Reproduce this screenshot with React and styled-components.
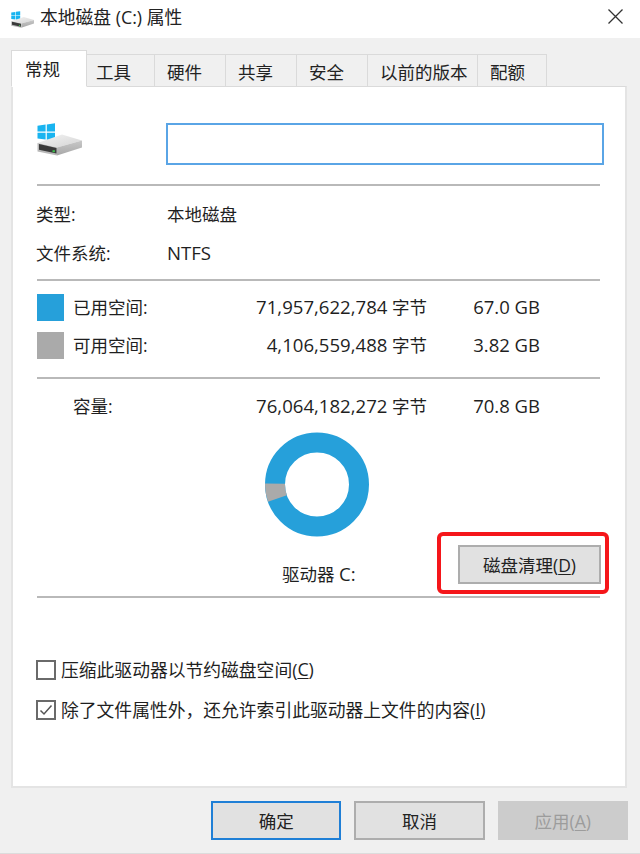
import React from "react";
import styled, { createGlobalStyle } from "styled-components";

const Global = createGlobalStyle`
  html, body { margin: 0; padding: 0; background: #f0f0f0; }
  body { width: 640px; height: 854px; overflow: hidden; }
  * { box-sizing: border-box; }
`;
const FONT = `"Open Sans", "Noto Sans CJK SC", sans-serif`;

const Dialog = styled.div`
  width: 640px; height: 854px; display: flex; flex-direction: column;
  background: #f0f0f0; border-bottom: 1px solid #dcdcdc;
  font-family: ${FONT}; font-size: 17.5px; color: #1f1f1f;
`;
const TitleBar = styled.header`
  height: 38px; background: #fff; display: flex; align-items: center;
  padding: 0 17px 0 11px; flex: none;
`;
const TitleText = styled.span`
  margin-left: 6px; font-size: 17.8px; flex: 1; color: #222; position: relative; top: -3px;
`;
const CloseButton = styled.span`display: flex; position: relative; top: -3px;`;
const Body = styled.div`padding: 12px 12px 0 11px; flex: 1; display: flex; flex-direction: column;`;
const TabStrip = styled.div`display: flex; align-items: flex-end; height: 37px; position: relative; z-index: 1;`;
const Tab = styled.div`
  width: ${p => p.$w}px; height: ${p => p.$active ? 37 : 33}px;
  display: flex; align-items: center; justify-content: flex-start;
  padding-left: ${p => p.$pad}px;
  background: ${p => p.$active ? "#fff" : "#f0f0f0"};
  border: 1px solid #dadada;
  border-left-width: ${p => p.$active ? 1 : 0}px;
  border-bottom: ${p => p.$active ? "1px solid #fff" : "1px solid #dadada"};
  font-size: 17.5px; color: #222;
  padding-top: ${p => p.$active ? 0 : 2}px;
  padding-bottom: ${p => p.$active ? 1 : 0}px;
  white-space: nowrap;
`;
const Panel = styled.main`
  height: 702px; margin-top: -1px; margin-right: 1px; background: #fff;
  border: 2px solid #e4e4e4; border-top-width: 1px; border-top-color: #dadada;
  padding: 36px 24px 0 24px; display: flex; flex-direction: column;
`;
const NameRow = styled.div`display: flex; align-items: flex-start; height: 61px;`;
const IconSlot = styled.div`width: 130px; flex: none;`;
const NameInput = styled.div`
  width: 438px; height: 42px; border: 2px solid #5aa5e6; background: #fff;
  margin-left: -1px; margin-right: -4px;
`;
const Divider = styled.hr`
  margin: 0 1px 0 0; border: 0; height: 2px; background: #b9b9b9; flex: none;
`;
const InfoGrid = styled.div`padding-top: 8px; height: 93px; display: flex; flex-direction: column;`;
const InfoRow = styled.div`display: flex; align-items: center; height: 39px;`;
const InfoLabel = styled.span`width: 130px; margin-left: -1px; margin-right: 1px;`;
const Latin = styled.span`font-size: 18.6px;`;
const SpaceGroup = styled.div`padding-top: 8px; height: 96px; display: flex; flex-direction: column;`;
const SpaceRow = styled.div`display: flex; align-items: center; height: 37.5px;`;
const Swatch = styled.span`
  width: 27px; height: 27px; background: ${p => p.$color}; flex: none; margin-right: 9px;
`;
const SpaceLabel = styled.span`width: 130px; flex: none; padding-left: 36px; position: relative; top: -1px;`;
const SpaceLabelInner = styled.span`width: 85px; flex: none; position: relative; top: -1px;`;
const Bytes = styled.span`
  width: ${p => p.$w}px; text-align: right; flex: none; white-space: nowrap;
  position: relative; top: -1px;
`;
const Size = styled.span`
  width: 113px; text-align: right; flex: none; white-space: nowrap; font-size: 18.5px;
  position: relative; top: -1px;
`;
const Capacity = styled.div`padding-top: 9px; height: 53px;`;
const DonutWrap = styled.div`display: flex; justify-content: center; width: 560px; height: 105px;`;
const DriveRow = styled.div`display: flex; align-items: flex-start; height: 59px; padding-top: 8px;`;
const DriveLabel = styled.span`margin-left: 245px; width: 179px; padding-top: 16px; margin-right: 3px;`;
const Highlighted = styled.span`position: relative; display: block;`;
const RedBox = styled.span`
  position: absolute; left: -21px; top: -13px; width: 172px; height: 62px;
  border: 4px solid #f5161a; border-radius: 6px; pointer-events: none;
`;
const Button = styled.button`
  width: ${p => p.$w}px; height: 39px; padding: 0; margin: 0;
  font-family: ${FONT}; font-size: 17.5px;
  color: ${p => p.$disabled ? "#9c9c9c" : "#222"};
  background: ${p => p.$disabled ? "#cccccc" : "#e1e1e1"};
  border: 2px solid ${p => p.$default ? "#1f7fd6" : p.$disabled ? "#cccccc" : "#adadad"};
  display: block;
`;
const Key = styled.span`text-decoration: underline; text-underline-offset: 2px;`;
const Checks = styled.div`padding-top: 61px; display: flex; flex-direction: column; gap: 20px;`;
const CheckRow = styled.label`display: flex; align-items: center; height: 20px; white-space: nowrap; margin-left: -1px; font-size: 17.8px;`;
const CheckBox = styled.span`
  width: 20px; height: 20px; border: 2px solid #6a6a6a; background: #fff;
  display: flex; align-items: center; justify-content: center; margin-right: 5px; flex: none;
  position: relative; top: 1px;
`;
const Footer = styled.footer`
  display: flex; padding: 13px 0 0 200px; gap: 13px;
`;

const Drive = ({ w, h }) => (
  <svg width={w} height={h} viewBox="0 0 45 33">
    <defs>
      <linearGradient id={`top${w}`} x1="0" y1="0" x2="1" y2="1">
        <stop offset="0" stopColor="#f4f4f4" /><stop offset="1" stopColor="#d4d4d4" />
      </linearGradient>
      <linearGradient id={`side${w}`} x1="0" y1="0" x2="0" y2="1">
        <stop offset="0" stopColor="#c8c8c8" /><stop offset="1" stopColor="#a8a8a8" />
      </linearGradient>
    </defs>
    <path d="M.5 2.8 8.6 1.6V8.6H.5ZM9.8 1.4 18 .3V8.6H9.8ZM.5 9.8H8.6V16.6L.5 15.6ZM9.8 9.8H18V17.6L9.8 16.8Z" fill="#19b4f0" />
    <path d="M.5 20 25 11.5 45 17.5 20 24.5Z" fill={`url(#top${w})`} />
    <path d="M20 24.5 45 17.5V24.5L20 32.5Z" fill={`url(#side${w})`} />
    <path d="M.5 20 20 24.5V32.5L.5 28.5Z" fill="#b8b8b8" />
    <path d="M2 21 19.5 25V30.5L2 26.8Z" fill="#3a3a3a" />
    <rect x="15.5" y="27.2" width="2.4" height="2" fill="#3fbf4c" />
  </svg>
);

const polar = (r, a) => [52 + r * Math.cos(a), 52.5 + r * Math.sin(a)];
const Donut = () => {
  const a0 = Math.PI + 0.02;
  const a1 = Math.PI - 0.34;
  const [x1, y1] = polar(52, a0); const [x2, y2] = polar(52, a1);
  const [x3, y3] = polar(32, a1); const [x4, y4] = polar(32, a0);
  return (
    <svg width="104" height="105" viewBox="0 0 104 105">
      <circle cx="52" cy="52.5" r="42" fill="none" stroke="#26a0da" strokeWidth="20" />
      <path d={`M${x1} ${y1}A52 52 0 0 0 ${x2} ${y2}L${x3} ${y3}A32 32 0 0 1 ${x4} ${y4}Z`} fill="#aaaaaa" />
    </svg>
  );
};

export default function App() {
  const tabs = [["常规", 76, 13, true], ["工具", 68, 9], ["硬件", 71, 12], ["共享", 71, 12], ["安全", 71, 12], ["以前的版本", 110, 12], ["配额", 69, 12]];
  return (
    <Dialog>
      <Global />
      <TitleBar>
        <Drive w={23} h={17} />
        <TitleText>本地磁盘 (C:) 属性</TitleText>
        <CloseButton>
          <svg width="15" height="15" viewBox="0 0 15 15"><path d="M.5.5 14.5 14.5M14.5.5.5 14.5" stroke="#333" strokeWidth="1.3" fill="none" /></svg>
        </CloseButton>
      </TitleBar>
      <Body>
        <TabStrip>
          {tabs.map(([t, w, pad, a]) => <Tab key={t} $w={w} $pad={pad} $active={a}>{t}</Tab>)}
        </TabStrip>
        <Panel>
          <NameRow>
            <IconSlot><Drive w={45} h={33} /></IconSlot>
            <NameInput />
          </NameRow>
          <Divider />
          <InfoGrid>
            <InfoRow><InfoLabel>类型:</InfoLabel><span>本地磁盘</span></InfoRow>
            <InfoRow><InfoLabel>文件系统:</InfoLabel><Latin>NTFS</Latin></InfoRow>
          </InfoGrid>
          <Divider />
          <SpaceGroup>
            <SpaceRow>
              <Swatch $color="#26a0da" />
              <SpaceLabelInner>已用空间:</SpaceLabelInner>
              <Bytes $w={269}><Latin>71,957,622,784</Latin> 字节</Bytes>
              <Size>67.0 GB</Size>
            </SpaceRow>
            <SpaceRow>
              <Swatch $color="#aaaaaa" />
              <SpaceLabelInner>可用空间:</SpaceLabelInner>
              <Bytes $w={269}><Latin>4,106,559,488</Latin> 字节</Bytes>
              <Size>3.82 GB</Size>
            </SpaceRow>
          </SpaceGroup>
          <Divider />
          <Capacity>
            <SpaceRow>
              <SpaceLabel>容量:</SpaceLabel>
              <Bytes $w={260}><Latin>76,064,182,272</Latin> 字节</Bytes>
              <Size>70.8 GB</Size>
            </SpaceRow>
          </Capacity>
          <DonutWrap><Donut /></DonutWrap>
          <DriveRow>
            <DriveLabel>驱动器 <Latin>C:</Latin></DriveLabel>
            <Highlighted>
              <Button $w={143}>磁盘清理(<Key>D</Key>)</Button>
              <RedBox />
            </Highlighted>
          </DriveRow>
          <Divider />
          <Checks>
            <CheckRow><CheckBox />压缩此驱动器以节约磁盘空间(<Key>C</Key>)</CheckRow>
            <CheckRow>
              <CheckBox>
                <svg width="14" height="12" viewBox="0 0 14 12"><path d="M1.5 6.5 5 10 12.5 1.5" stroke="#555" strokeWidth="1.5" fill="none" /></svg>
              </CheckBox>
              除了文件属性外，还允许索引此驱动器上文件的内容(<Key>I</Key>)
            </CheckRow>
          </Checks>
        </Panel>
        <Footer>
          <Button $w={130.5} $default>确定</Button>
          <Button $w={130.5}>取消</Button>
          <Button $w={130.5} $disabled>应用(<Key>A</Key>)</Button>
        </Footer>
      </Body>
    </Dialog>
  );
}
